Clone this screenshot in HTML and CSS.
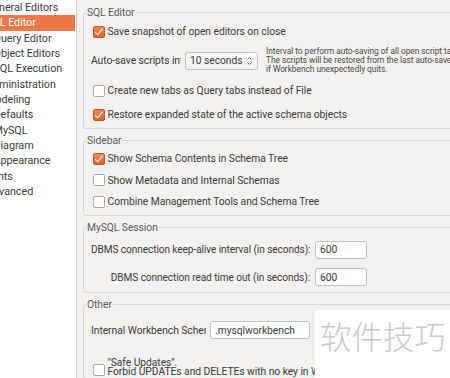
FILE: index.html
```html
<!DOCTYPE html>
<html>
<head>
<meta charset="utf-8">
<link rel="stylesheet" href="styles.css">
</head>
<body>
<div class="window">
  <nav class="sidebar">
    <ul class="tree">
      <li class="top">General Editors</li>
      <li class="top selected">SQL Editor</li>
      <li class="child">Query Editor</li>
      <li class="child">Object Editors</li>
      <li class="child">SQL Execution</li>
      <li class="top">Administration</li>
      <li class="top">Modeling</li>
      <li class="child">Defaults</li>
      <li class="child">MySQL</li>
      <li class="child">Diagram</li>
      <li class="child">Appearance</li>
      <li class="top">Fonts</li>
      <li class="top">Advanced</li>
    </ul>
  </nav>
  <main class="panel">
    <fieldset class="group g-editor">
      <legend>SQL Editor</legend>
      <div class="row r1"><span class="cb checked"></span><span>Save snapshot of open editors on close</span></div>
      <div class="row r2">
        <span class="clip-label w-auto">Auto-save scripts interval:</span>
        <span class="spin"><span>10 seconds</span>
          <svg class="arrows" width="7" height="10" viewBox="0 0 7 10"><path d="M1.5 3.5 L3.5 1.5 L5.5 3.5 M1.5 6.5 L3.5 8.5 L5.5 6.5" fill="none" stroke="#6a6a6a" stroke-width="1"/></svg>
        </span>
        <span class="hint">Interval to perform auto-saving of all open script tabs.<br>The scripts will be restored from the last auto-save<br>if Workbench unexpectedly quits.</span>
      </div>
      <div class="row r3"><span class="cb"></span><span>Create new tabs as Query tabs instead of File</span></div>
      <div class="row r4"><span class="cb checked"></span><span>Restore expanded state of the active schema objects</span></div>
    </fieldset>

    <fieldset class="group g-sidebar">
      <legend>Sidebar</legend>
      <div class="row rs"><span class="cb checked"></span><span>Show Schema Contents in Schema Tree</span></div>
      <div class="row rs"><span class="cb"></span><span>Show Metadata and Internal Schemas</span></div>
      <div class="row rs"><span class="cb"></span><span>Combine Management Tools and Schema Tree</span></div>
    </fieldset>

    <fieldset class="group g-session">
      <legend>MySQL Session</legend>
      <div class="form-grid">
        <span class="flabel">DBMS connection keep-alive interval (in seconds):</span>
        <span class="input small">600</span>
        <span class="flabel">DBMS connection read time out (in seconds):</span>
        <span class="input small">600</span>
      </div>
    </fieldset>

    <fieldset class="group g-other">
      <legend>Other</legend>
      <div class="row ro1">
        <span class="clip-label w-schema">Internal Workbench Schema:</span>
        <span class="input wide">.mysqlworkbench</span>
      </div>
      <div class="row ro2">
        <span class="cb"></span>
        <span class="stack">"Safe Updates".<br>Forbid UPDATEs and DELETEs with no key in WHERE clause</span>
      </div>
    </fieldset>
  </main>
  <div class="watermark">软件技巧</div>
</div>
</body>
</html>
```

FILE: styles.css
```css
* { box-sizing: border-box; }
html, body { margin: 0; padding: 0; }
body {
  width: 450px;
  height: 378px;
  overflow: hidden;
  background: #f2f1f0;
  font-family: Roboto, "Noto Sans", "Noto Sans CJK SC", sans-serif;
  font-size: 10.3px;
  letter-spacing: -0.05px;
  color: #3c3c3c;
}
.window {
  position: relative;
  display: flex;
  width: 450px;
  height: 378px;
  overflow: hidden;
}
.sidebar {
  flex: 0 0 77px;
  background: #ffffff;
  border-right: 1px solid #d3d1cd;
  overflow: hidden;
}
.tree {
  list-style: none;
  margin: 0;
  padding: 0;
  font-size: 10.8px;
}
.tree li {
  height: 15.33px;
  line-height: 15.33px;
  white-space: nowrap;
  width: 75px;
}
.tree li.top { text-indent: -14px; }
.tree li.child { text-indent: -6.5px; }
.tree li.selected {
  background: #f07746;
  color: #ffffff;
}
.panel {
  flex: 1;
  padding: 5px 0 0 6px;
  overflow: hidden;
  min-width: 0;
}
.group {
  width: 420px;
  margin: 0;
  padding: 0 0 0 7px;
  border: 1px solid #d8d6d2;
  border-radius: 3px;
}
.group legend {
  line-height: 15px;
  color: #5c5c5c;
  padding: 0 1px;
  margin-left: -5px;
}
.g-sidebar { margin-top: 4.5px; padding-bottom: 2px; }
.g-session { margin-top: 4.5px; padding-bottom: 1.5px; }
.g-other { margin-top: 4.5px; }

.row {
  display: flex;
  align-items: center;
  white-space: nowrap;
}
.r1 { height: 23px; }
.r2 { height: 35.5px; }
.r3 { height: 24px; }
.r4 { height: 24px; margin-bottom: 1px; }
.rs { height: 21.5px; }
.ro1 { height: 36px; }
.ro2 { height: 30px; align-items: flex-end; }

.cb {
  flex: 0 0 12px;
  width: 12px;
  height: 12px;
  margin: 0 3px 0 1.5px;
  border: 1px solid #aeaca8;
  border-radius: 2px;
  background: #ffffff;
  position: relative;
}
.cb.checked {
  border-color: #c75529;
  background: linear-gradient(#f48552, #e4622d);
}
.cb.checked::after {
  content: "";
  position: absolute;
  left: 3.5px;
  top: 0.5px;
  width: 3px;
  height: 6.5px;
  border: solid #ffffff;
  border-width: 0 1.6px 1.6px 0;
  transform: rotate(40deg);
}
.clip-label {
  overflow: hidden;
  white-space: nowrap;
  flex: none;
}
.w-auto { width: 90px; }
.w-schema { width: 115px; }
.spin {
  flex: none;
  display: flex;
  align-items: center;
  justify-content: space-between;
  width: 73px;
  height: 18px;
  margin-left: 4px;
  padding: 0 4px 0 4px;
  background: linear-gradient(#fbfbfa, #f1f0ef);
  border: 1px solid #c3c1bd;
  border-radius: 3px;
}
.spin .arrows { flex: none; }
.hint {
  margin-left: 8px;
  font-size: 8.4px;
  line-height: 9.3px;
  color: #4a4a4a;
}
.form-grid {
  display: grid;
  grid-template-columns: 219px 52px;
  grid-template-rows: 29px 26px;
  column-gap: 5px;
  align-items: center;
}
.flabel { text-align: right; white-space: nowrap; font-size: 10.1px; letter-spacing: -0.08px; }
.input {
  display: flex;
  align-items: center;
  height: 18px;
  padding-left: 4px;
  background: #ffffff;
  border: 1px solid #c3c1bd;
  border-radius: 3px;
}
.small { width: 52px; }
.wide { width: 100px; margin-left: 4px; }
.stack {
  line-height: 8.3px;
  padding-bottom: 2px;
}
.ro2 .cb { align-self: flex-end; margin-bottom: 2px; }

.watermark {
  position: absolute;
  left: 315px;
  top: 310px;
  right: 0;
  bottom: 0;
  background: #ffffff;
  color: #cbcbcb;
  font-size: 31.5px;
  line-height: 50px;
  padding-left: 5px;
  white-space: nowrap;
  font-family: "Noto Sans CJK SC", sans-serif;
  font-weight: 300;
}
```
